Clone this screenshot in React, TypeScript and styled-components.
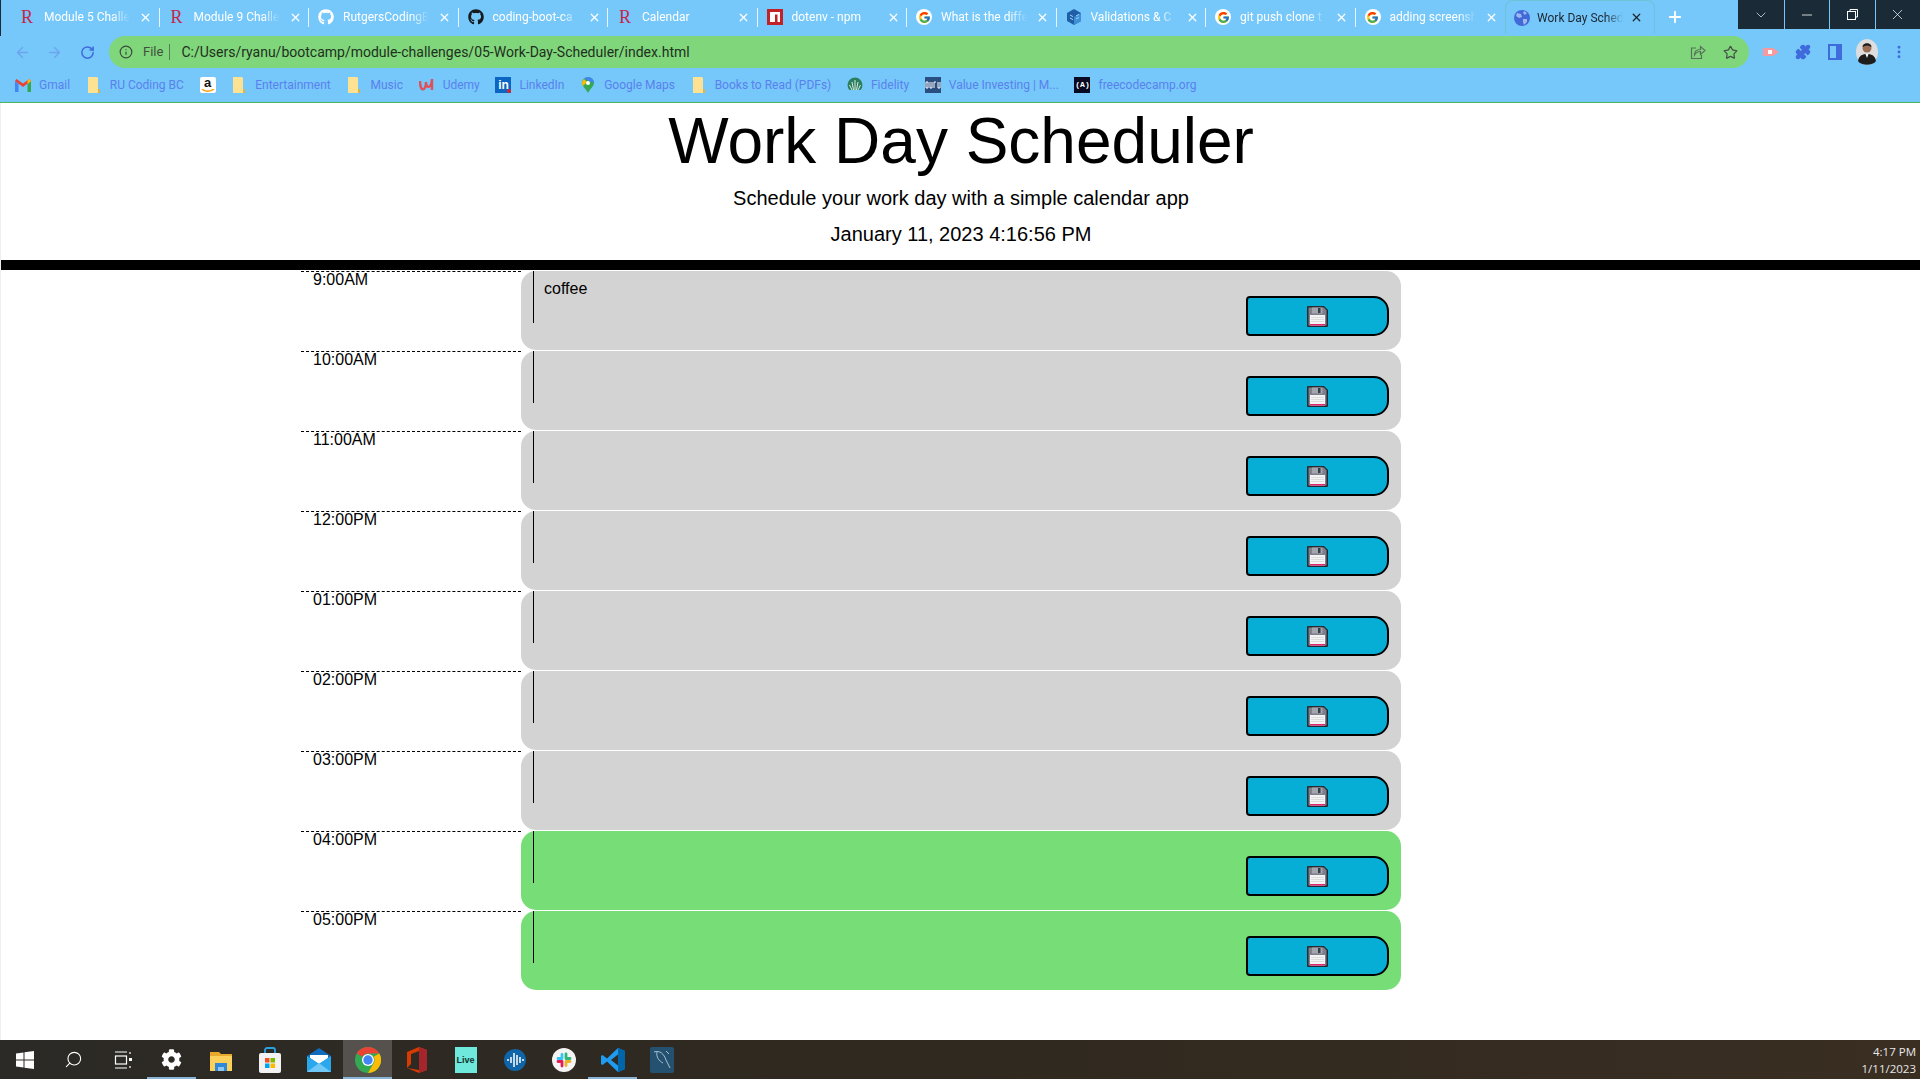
import styled, { createGlobalStyle } from "styled-components";
import { ArrowLeft, ArrowRight, RotateCw, Info, Star, Plus, X, ChevronDown, Minus, Search, MoreVertical, Puzzle } from "lucide-react";
import { FaGithub, FaCog } from "react-icons/fa";
import { FcGoogle } from "react-icons/fc";
import type { ReactNode } from "react";

const GlobalStyle = createGlobalStyle`
  html, body {
    margin: 0;
    padding: 0;
    background: #fff;
    overflow: hidden;
  }
  * { box-sizing: border-box; }
`;

const Screen = styled.div`
  width: 1920px;
  height: 1079px;
  display: flex;
  flex-direction: column;
  overflow: hidden;
  font-family: "Liberation Sans", Arial, sans-serif;
`;

const BrowserChrome = styled.header`
  height: 103px;
  flex: none;
  background: #76c8fa;
  border-bottom: 1px solid #4cb45a;
  font-family: "Roboto", "Liberation Sans", sans-serif;
`;

const TabStrip = styled.div`
  height: 36px;
  padding-left: 9px;
  border-left: 1px solid #1a2a36;
  display: flex;
  align-items: flex-start;
`;

const Tab = styled.div<{ $active?: boolean; $noRule?: boolean }>`
  width: 149.5px;
  height: 34px;
  flex: none;
  padding: 0 0 0 ${(p) => (p.$active ? "8px" : "9px")};
  display: flex;
  align-items: center;
  gap: ${(p) => (p.$active ? "7px" : "9px")};
  position: relative;
  ${(p) =>
    p.$active &&
    `
    border: 1px solid rgba(76, 180, 110, 0.25);
    border-bottom: none;
    border-radius: 8px 8px 0 0;
  `}
  ${(p) =>
    !p.$noRule &&
    `
    &::after {
      content: "";
      position: absolute;
      right: 0;
      top: 8px;
      width: 1px;
      height: 19px;
      background: #e8f5fe;
    }
  `}
`;

const TabIcon = styled.span`
  width: 16px;
  height: 16px;
  flex: none;
  display: flex;
  align-items: center;
  justify-content: center;
`;

const RutgersMark = styled.span`
  font-family: "Liberation Serif", serif;
  font-size: 18px;
  line-height: 16px;
  color: #c8254a;
`;

const GIcon = styled.span`
  width: 16px;
  height: 16px;
  border-radius: 50%;
  background: #fff;
  display: flex;
  align-items: center;
  justify-content: center;
`;

const TabTitle = styled.span<{ $active?: boolean }>`
  width: 86px;
  flex: none;
  white-space: nowrap;
  font-size: 12px;
  color: ${(p) => (p.$active ? "#1c2630" : "#fff")};
  mask-image: linear-gradient(90deg, #000 80%, transparent);
`;

const NewTab = styled.div`
  width: 40px;
  height: 34px;
  flex: none;
  display: flex;
  align-items: center;
  justify-content: center;
`;

const WindowControls = styled.div`
  margin-left: auto;
  display: flex;
  height: 29px;
`;

const WindowButton = styled.div`
  width: 45.5px;
  height: 29px;
  background: #1a2a36;
  color: #fff;
  display: flex;
  align-items: center;
  justify-content: center;
  & + & {
    border-left: 1px solid #76c8fa;
  }
`;

const AddressRow = styled.div`
  height: 32px;
  padding-left: 6px;
  display: flex;
  align-items: center;
`;

const NavButton = styled.div`
  width: 32.5px;
  flex: none;
  display: flex;
  justify-content: center;
`;

const Omnibox = styled.div`
  width: 1640px;
  height: 32px;
  margin-left: 5.5px;
  padding: 0 3px 0 10px;
  flex: none;
  border-radius: 16px;
  background: #80d67a;
  display: flex;
  align-items: center;
`;

const FileLabel = styled.span`
  margin-left: 10px;
  padding-right: 6px;
  border-right: 1px solid #5a7a5a;
  font-size: 13px;
  line-height: 16px;
  color: #3f4f3f;
`;

const Url = styled.span`
  margin-left: 11px;
  flex: 1;
  font-size: 14px;
  color: #20301f;
  white-space: nowrap;
`;

const OmniAction = styled.span`
  width: 32px;
  display: flex;
  justify-content: center;
`;

const ToolbarIcons = styled.div`
  margin-left: 6px;
  display: flex;
  align-items: center;
`;

const ToolIcon = styled.div`
  width: 32px;
  height: 32px;
  display: flex;
  align-items: center;
  justify-content: center;
`;

const BookmarkBar = styled.nav`
  height: 34px;
  padding-left: 15px;
  display: flex;
  align-items: center;
  gap: 15.7px;
`;

const Bookmark = styled.div`
  display: flex;
  align-items: center;
  gap: 8px;
`;

const BookmarkIcon = styled.span`
  width: 16px;
  height: 16px;
  display: flex;
  align-items: center;
  justify-content: center;
`;

const BookmarkLabel = styled.span`
  font-size: 12px;
  color: #5a80ee;
  white-space: nowrap;
`;

const AmazonBox = styled.span`
  width: 16px;
  height: 16px;
  border-radius: 2px;
  background: #fff;
  display: flex;
  flex-direction: column;
  align-items: center;
  font-family: "Liberation Sans", sans-serif;
  font-size: 13px;
  font-weight: 700;
  line-height: 12px;
  color: #111;
`;

const LinkedinBox = styled.span`
  width: 16px;
  height: 16px;
  position: relative;
  background: #0a66c2;
  font-family: "Liberation Sans", sans-serif;
  font-size: 12px;
  font-weight: 700;
  line-height: 16px;
  text-align: center;
  color: #fff;
`;

const LinkedinDot = styled.span`
  position: absolute;
  right: 0;
  bottom: 0;
  width: 4px;
  height: 4px;
  border-radius: 50%;
  background: #e02020;
`;

const GuruBox = styled.span`
  width: 16px;
  height: 16px;
  background: #2a4e80;
  display: flex;
  align-items: center;
`;

const FccBox = styled.span`
  width: 16px;
  height: 16px;
  background: #0a0a23;
  font-family: "Liberation Mono", monospace;
  font-size: 8px;
  font-weight: 700;
  line-height: 16px;
  text-align: center;
  color: #fff;
`;

const Page = styled.main`
  flex: 1;
  min-height: 0;
  border-left: 1px solid #eceef0;
  background: #fff;
  color: #000;
`;

const Jumbotron = styled.div`
  height: 167px;
  padding: 2px 0 0 1px;
  border-bottom: 10px solid #000;
  text-align: center;
`;

const Title = styled.h1`
  margin: 0 0 9px;
  font-size: 64px;
  font-weight: 400;
  line-height: 72px;
`;

const Lead = styled.p`
  margin: 0 0 12px;
  font-size: 20px;
  line-height: 24px;
`;

const Schedule = styled.section`
  width: 1320px;
  margin: 1px 0 0 300px;
`;

const TimeBlock = styled.div`
  height: 80px;
  display: flex;
`;

const Hour = styled.div`
  width: 220px;
  height: 80px;
  flex: none;
  padding: 0 0 0 12px;
  border-top: 1px dashed #000;
  font-size: 16px;
  line-height: 16px;
`;

const Entry = styled.div<{ $tone: string }>`
  width: 880px;
  height: 79px;
  padding-left: 12px;
  border-radius: 15px;
  background: ${(p) => (p.$tone === "future" ? "#77dd77" : "#d3d3d3")};
  position: relative;
`;

const Note = styled.textarea`
  display: block;
  width: 700px;
  height: 52px;
  padding: 9px 10px;
  border: none;
  border-left: 1px solid #000;
  background: transparent;
  resize: none;
  outline: none;
  font-family: "Liberation Sans", Arial, sans-serif;
  font-size: 16px;
  line-height: 18px;
  color: #000;
`;

const SaveButton = styled.button`
  position: absolute;
  top: 25px;
  right: 12px;
  width: 143px;
  height: 40px;
  padding: 0;
  border: 2px solid #000;
  border-radius: 4px 15px 15px 4px;
  background: #06aed5;
  display: flex;
  align-items: center;
  justify-content: center;
`;

const Taskbar = styled.footer`
  height: 39px;
  flex: none;
  background: linear-gradient(90deg, #2c2a26, #30291f 50%, #3a2e22);
  display: flex;
  align-items: stretch;
`;

const TaskbarItem = styled.div<{ $open?: boolean; $current?: boolean }>`
  width: 49px;
  flex: none;
  display: flex;
  align-items: center;
  justify-content: center;
  background: ${(p) => (p.$current ? "#55524d" : "transparent")};
  box-shadow: ${(p) => (p.$open ? "inset 0 -2px 0 #8ab4d8" : "none")};
`;

const LiveBox = styled.span`
  width: 22px;
  height: 26px;
  background: #6fe9dc;
  font-family: "Liberation Sans", sans-serif;
  font-size: 9px;
  font-weight: 700;
  line-height: 26px;
  text-align: center;
  color: #12332f;
`;

const Clock = styled.div`
  margin-left: auto;
  padding-right: 4px;
  display: flex;
  flex-direction: column;
  align-items: flex-end;
  justify-content: center;
  gap: 2px;
  font-family: "Open Sans", "Liberation Sans", sans-serif;
  font-size: 11.5px;
  line-height: 15px;
  color: #e8e8e8;
`;

/* ---------- small drawn icons ---------- */

const RutgersIcon = () => <RutgersMark>R</RutgersMark>;

const NpmIcon = () => (
  <svg width="16" height="16" viewBox="0 0 16 16">
    <rect width="16" height="16" fill="#c12127" />
    <path d="M3 3h10v10h-2.500V5.500H8V13H3z" fill="#fff" />
  </svg>
);

const CubeIcon = () => (
  <svg width="16" height="16" viewBox="0 0 16 16">
    <path d="M8 0l7 4v8l-7 4-7-4V4z" fill="#1f5fa8" />
    <path d="M8 8l7-4v8l-7 4z" fill="#3d8fd6" />
    <path d="M4 6l3 1.600M4 9l3 1.600M10 7l3-1.600M10 10l3-1.600" stroke="#a8d4f5" strokeWidth="1" />
  </svg>
);

const GlobeIcon = () => (
  <svg width="16" height="16" viewBox="0 0 16 16">
    <circle cx="8" cy="8" r="8" fill="#4169d8" />
    <path d="M3 3l4 1 1 3-3 1-3-2zM9 9l4 0 0 3-3 3-1-3zM10 1l3 2-2 2-2-2z" fill="#9db8ee" />
  </svg>
);

const ShareIcon = () => (
  <svg width="16" height="16" viewBox="0 0 16 16" fill="none" stroke="#57705a" strokeWidth="1.200">
    <path d="M6 4H1.500v10.500h10V11" />
    <path d="M4.500 11c0-3.500 2.500-5.500 6-5.500V2.500L15 6.500l-4.500 4V7.500c-2.500 0-4.500 1-6 3.500z" />
  </svg>
);

const GmailIcon = () => (
  <svg width="16" height="13" viewBox="0 0 16 13">
    <path d="M0 2v11h3.500V5z" fill="#4285f4" />
    <path d="M16 2v11h-3.500V5z" fill="#34a853" />
    <path d="M0 2l8 6 8-6-1.500-2L8 4.500 1.500 0z" fill="#ea4335" />
    <path d="M14.500 0L16 2l-3.500 3V1.500z" fill="#fbbc04" />
  </svg>
);

const FolderIcon = () => (
  <svg width="12" height="16" viewBox="0 0 12 16">
    <path d="M0 0h9l1 1v11l2 0v4H0z" fill="#fde293" />
    <path d="M10 12h2v4h-2z" fill="#d9b44a" />
  </svg>
);

const AmazonIcon = () => (
  <AmazonBox>
    a
    <svg width="14" height="4" viewBox="0 0 14 4">
      <path d="M1 0c3 3 8 3 12 0" stroke="#f90" strokeWidth="1.500" fill="none" />
    </svg>
  </AmazonBox>
);

const UdemyIcon = () => (
  <svg width="16" height="14" viewBox="0 0 16 14">
    <path d="M1 3c0 11 6 11 6 1M7 4c0 6 5 8 6-3M13 1v11" stroke="#e0505a" strokeWidth="2.400" fill="none" />
  </svg>
);

const LinkedinIcon = () => (
  <LinkedinBox>
    in
    <LinkedinDot />
  </LinkedinBox>
);

const MapsIcon = () => (
  <svg width="12" height="16" viewBox="0 0 12 16">
    <path d="M6 0a6 6 0 0 1 6 6c0 3-4 6-6 10-2-4-6-7-6-10a6 6 0 0 1 6-6z" fill="#34a853" />
    <path d="M6 0a6 6 0 0 1 6 6L2 2a6 6 0 0 1 4-2z" fill="#4285f4" />
    <path d="M0 6a6 6 0 0 1 2-4l3 3-4 4a5 5 0 0 1-1-3z" fill="#fbbc04" />
    <circle cx="6" cy="6" r="2" fill="#fff" />
  </svg>
);

const FidelityIcon = () => (
  <svg width="16" height="16" viewBox="0 0 16 16">
    <circle cx="8" cy="8" r="7.500" fill="#2b7f5e" />
    <path d="M8 3v10M5 5l1.500 8M11 5l-1.500 8M2.500 8L5 13M13.500 8L11 13" stroke="#d7ece2" strokeWidth="1" />
    <rect x="0" y="13" width="16" height="3" fill="#76c8fa" />
  </svg>
);

const GuruIcon = () => (
  <GuruBox>
    <svg width="16" height="9" viewBox="0 0 16 9">
      <path d="M1 1h2v6H1zM5 1v6h2V1M9 7V1h2M13 1v6h2V1" stroke="#fff" strokeWidth="1" fill="none" />
    </svg>
  </GuruBox>
);

const FccIcon = () => <FccBox>(A)</FccBox>;

const WindowsLogo = () => (
  <svg width="18" height="18" viewBox="0 0 18 18">
    <path d="M0 2.500l7.500-1V8.500H0zM8.500 1.300L18 0v8.500H8.500zM0 9.500h7.500v7L0 15.500zM8.500 9.500H18V18l-9.500-1.300z" fill="#fff" />
  </svg>
);

const TaskViewIcon = () => (
  <svg width="18" height="18" viewBox="0 0 18 18" fill="none" stroke="#fff" strokeWidth="1.200">
    <path d="M1 1h12M1 17h12" />
    <rect x="1.500" y="5" width="11" height="8" />
    <path d="M16 1v2M16 15v2" />
    <rect x="15" y="7" width="3" height="3" fill="#fff" stroke="none" />
  </svg>
);

const ExplorerIcon = () => (
  <svg width="24" height="24" viewBox="0 0 24 24">
    <path d="M1 4h9l2 2h11v4H1z" fill="#e6a92e" />
    <path d="M1 8h22v15H1z" fill="#fbd15b" />
    <path d="M6 15h12v8H6z" fill="#2f88d8" />
    <path d="M9 19h6v4H9z" fill="#8cc8f2" />
  </svg>
);

const StoreIcon = () => (
  <svg width="24" height="26" viewBox="0 0 24 26">
    <path d="M7 7V3a2 2 0 0 1 2-2h6a2 2 0 0 1 2 2v4" stroke="#2aa1e0" strokeWidth="1.800" fill="none" />
    <rect x="1" y="6" width="22" height="20" rx="2" fill="#f2f2f2" />
    <rect x="7" y="11" width="4.500" height="4.500" fill="#f25022" />
    <rect x="12.500" y="11" width="4.500" height="4.500" fill="#7fba00" />
    <rect x="7" y="16.500" width="4.500" height="4.500" fill="#00a4ef" />
    <rect x="12.500" y="16.500" width="4.500" height="4.500" fill="#ffb900" />
  </svg>
);

const MailIcon = () => (
  <svg width="24" height="24" viewBox="0 0 24 24">
    <path d="M0 8l12-8 12 8v16H0z" fill="#0f6cbd" />
    <path d="M3 7h18v3l-9 6-9-6z" fill="#fff" />
    <path d="M0 8l12 8 12-8v16H0z" fill="#2aa8ee" />
    <path d="M0 24l12-9 12 9z" fill="#6fc8f5" />
  </svg>
);

const ChromeIcon = () => (
  <svg width="26" height="26" viewBox="0 0 26 26">
    <circle cx="13" cy="13" r="13" fill="#34a853" />
    <path d="M13 0a13 13 0 0 1 11.300 6.500H13a6.500 6.500 0 0 0-5.600 3.200L1.700 6.500A13 13 0 0 1 13 0z" fill="#ea4335" />
    <path d="M24.300 6.500A13 13 0 0 1 13 26l5.600-9.700a6.500 6.500 0 0 0 0-6.500z" fill="#fbbc04" />
    <circle cx="13" cy="13" r="6" fill="#fff" />
    <circle cx="13" cy="13" r="4.700" fill="#4285f4" />
  </svg>
);

const OfficeIcon = () => (
  <svg width="20" height="26" viewBox="0 0 20 26">
    <path d="M0 5l12-5 8 3v20l-8 3-12-5 12 2V4L4 7v10l-4 4z" fill="#d83b01" />
    <path d="M12 0l8 3v20l-8 3z" fill="#a4262c" />
  </svg>
);

const SoundIcon = () => (
  <svg width="22" height="22" viewBox="0 0 22 22">
    <circle cx="11" cy="11" r="11" fill="#0f65a8" />
    <path d="M4 10v2M7 8v6M10 4v14M13 6v10M16 8v6M19 10v2" stroke="#fff" strokeWidth="1.500" />
  </svg>
);

const SlackIcon = () => (
  <svg width="24" height="24" viewBox="0 0 24 24">
    <circle cx="12" cy="12" r="12" fill="#f4f4f4" />
    <g strokeWidth="2.800" strokeLinecap="round">
      <path d="M10 6.500v4M6 10.500h4" stroke="#36c5f0" />
      <path d="M14 6v4.500M18 10.500h-4" stroke="#2eb67d" />
      <path d="M14 17.500v-4M18 13.500h-4" stroke="#ecb22e" />
      <path d="M10 18v-4.500M6 13.500h4" stroke="#e01e5a" />
    </g>
  </svg>
);

const CodeIcon = () => (
  <svg width="24" height="24" viewBox="0 0 24 24">
    <path d="M17 0l7 3v18l-7 3L6 13.500 1.500 17 0 16v-8l1.500-1L6 10.500z" fill="#1f9cf0" />
    <path d="M17 6.500L10 12l7 5.500z" fill="#2f2a24" />
    <path d="M17 0l7 3v18l-7 3z" fill="#0065a9" />
  </svg>
);

const WorkbenchIcon = () => (
  <svg width="24" height="26" viewBox="0 0 24 26">
    <rect width="24" height="26" rx="2" fill="#24516f" />
    <path d="M4 5c6-2 10 2 12 8 1 3 3 5 4 8M7 5c-1 5 2 9 6 11M16 4l3 3" stroke="#a9c1d1" strokeWidth="1" fill="none" />
  </svg>
);

const FloppyIcon = () => (
  <svg width="21" height="21" viewBox="0 0 21 21">
    <path d="M0 1a1 1 0 0 1 1-1h16l4 4v16a1 1 0 0 1-1 1H1a1 1 0 0 1-1-1z" fill="#262a33" />
    <path d="M1.500 1.500h15.500l2.500 3v15h-18z" fill="#7d7f8a" />
    <rect x="5" y="1.500" width="10.500" height="6" fill="#a3a5ae" />
    <rect x="11" y="2" width="2.500" height="5" fill="#3a3e48" />
    <rect x="3" y="9" width="15" height="10.500" fill="#f4f4f4" />
    <path d="M4 11.500h13M4 13.500h13M4 15.500h13" stroke="#dcdcdc" strokeWidth="1" />
    <rect x="3" y="18" width="15" height="1.500" fill="#e0246f" />
  </svg>
);

/* ---------- data ---------- */

const tabs: { title: string; icon: ReactNode; active?: boolean; noRule?: boolean }[] = [
  { title: "Module 5 Challe", icon: <RutgersIcon /> },
  { title: "Module 9 Challe", icon: <RutgersIcon /> },
  { title: "RutgersCodingB", icon: <FaGithub size={16} color="#fff" /> },
  { title: "coding-boot-ca", icon: <FaGithub size={16} color="#161b22" /> },
  { title: "Calendar", icon: <RutgersIcon /> },
  { title: "dotenv - npm", icon: <NpmIcon /> },
  { title: "What is the diffe", icon: <GIcon><FcGoogle size={13} /></GIcon> },
  { title: "Validations & C", icon: <CubeIcon /> },
  { title: "git push clone t", icon: <GIcon><FcGoogle size={13} /></GIcon> },
  { title: "adding screensh", icon: <GIcon><FcGoogle size={13} /></GIcon>, noRule: true },
  { title: "Work Day Sched", icon: <GlobeIcon />, active: true, noRule: true },
];

const bookmarks: { label?: string; icon: ReactNode }[] = [
  { label: "Gmail", icon: <GmailIcon /> },
  { label: "RU Coding BC", icon: <FolderIcon /> },
  { icon: <AmazonIcon /> },
  { label: "Entertainment", icon: <FolderIcon /> },
  { label: "Music", icon: <FolderIcon /> },
  { label: "Udemy", icon: <UdemyIcon /> },
  { label: "LinkedIn", icon: <LinkedinIcon /> },
  { label: "Google Maps", icon: <MapsIcon /> },
  { label: "Books to Read (PDFs)", icon: <FolderIcon /> },
  { label: "Fidelity", icon: <FidelityIcon /> },
  { label: "Value Investing | M...", icon: <GuruIcon /> },
  { label: "freecodecamp.org", icon: <FccIcon /> },
];

const hours = [
  { time: "9:00AM", tone: "past", text: "coffee" },
  { time: "10:00AM", tone: "past", text: "" },
  { time: "11:00AM", tone: "past", text: "" },
  { time: "12:00PM", tone: "past", text: "" },
  { time: "01:00PM", tone: "past", text: "" },
  { time: "02:00PM", tone: "past", text: "" },
  { time: "03:00PM", tone: "past", text: "" },
  { time: "04:00PM", tone: "future", text: "" },
  { time: "05:00PM", tone: "future", text: "" },
];

const taskbarItems: { icon: ReactNode; open?: boolean; current?: boolean }[] = [
  { icon: <WindowsLogo /> },
  { icon: <Search size={19} color="#fff" strokeWidth={1.4} style={{ transform: "scaleX(-1)" }} /> },
  { icon: <TaskViewIcon /> },
  { icon: <FaCog size={21} color="#fff" />, open: true },
  { icon: <ExplorerIcon /> },
  { icon: <StoreIcon /> },
  { icon: <MailIcon /> },
  { icon: <ChromeIcon />, open: true, current: true },
  { icon: <OfficeIcon /> },
  { icon: <LiveBox>Live</LiveBox> },
  { icon: <SoundIcon /> },
  { icon: <SlackIcon /> },
  { icon: <CodeIcon />, open: true },
  { icon: <WorkbenchIcon /> },
];

export default function App() {
  return (
    <Screen>
      <GlobalStyle />
      <BrowserChrome>
        <TabStrip>
          {tabs.map((tab) => (
            <Tab key={tab.title} $active={tab.active} $noRule={tab.noRule}>
              <TabIcon>{tab.icon}</TabIcon>
              <TabTitle $active={tab.active}>{tab.title}</TabTitle>
              <X size={13} strokeWidth={2.4} color={tab.active ? "#1c2630" : "#fff"} />
            </Tab>
          ))}
          <NewTab>
            <Plus size={18} strokeWidth={2.4} color="#fff" />
          </NewTab>
          <WindowControls>
            <WindowButton><ChevronDown size={16} strokeWidth={1} /></WindowButton>
            <WindowButton><Minus size={16} strokeWidth={1.2} /></WindowButton>
            <WindowButton>
              <svg width="11" height="11" viewBox="0 0 11 11" fill="none" stroke="#fff">
                <rect x="0.5" y="2.5" width="8" height="8" />
                <path d="M3 2.5V.5h7.500V8H8.500" />
              </svg>
            </WindowButton>
            <WindowButton><X size={17} strokeWidth={1} /></WindowButton>
          </WindowControls>
        </TabStrip>
        <AddressRow>
          <NavButton><ArrowLeft size={17} color="#6ea4ee" strokeWidth={2} /></NavButton>
          <NavButton><ArrowRight size={17} color="#6ea4ee" strokeWidth={2} /></NavButton>
          <NavButton><RotateCw size={15} color="#3f6bdc" strokeWidth={2.4} /></NavButton>
          <Omnibox>
            <Info size={14} color="#3c4a3a" />
            <FileLabel>File</FileLabel>
            <Url>C:/Users/ryanu/bootcamp/module-challenges/05-Work-Day-Scheduler/index.html</Url>
            <OmniAction><ShareIcon /></OmniAction>
            <OmniAction><Star size={15} color="#44524a" strokeWidth={2} /></OmniAction>
          </Omnibox>
          <ToolbarIcons>
            <ToolIcon>
              <svg width="16" height="12" viewBox="0 0 16 12">
                <path d="M0 2h10l6 4-6 4H0z" fill="#f79a9f" />
                <rect x="5" y="4" width="4" height="4" fill="#fff" />
              </svg>
            </ToolIcon>
            <ToolIcon><Puzzle size={16} color="#3f6bdc" fill="#3f6bdc" /></ToolIcon>
            <ToolIcon>
              <svg width="14" height="16" viewBox="0 0 14 16">
                <rect width="14" height="16" fill="#3f6bdc" />
                <rect x="2" y="2" width="6" height="12" fill="#76c8fa" />
              </svg>
            </ToolIcon>
            <ToolIcon>
              <svg width="22" height="26" viewBox="0 0 22 26">
                <ellipse cx="11" cy="13" rx="11" ry="13" fill="#ddd" />
                <path d="M2 22c1-6 5-7 9-7s8 1 9 7c-3 5-15 5-18 0z" fill="#1c1c1c" />
                <path d="M9.500 15h3l-1.500 4z" fill="#fff" />
                <circle cx="11" cy="9" r="4.500" fill="#9a6d55" />
                <path d="M6.500 8c0-5 9-5 9 0-3-2-6-2-9 0z" fill="#1c1c1c" />
              </svg>
            </ToolIcon>
            <ToolIcon><MoreVertical size={16} color="#3f6bdc" strokeWidth={2.4} /></ToolIcon>
          </ToolbarIcons>
        </AddressRow>
        <BookmarkBar>
          {bookmarks.map((mark, i) => (
            <Bookmark key={i}>
              <BookmarkIcon>{mark.icon}</BookmarkIcon>
              {mark.label && <BookmarkLabel>{mark.label}</BookmarkLabel>}
            </Bookmark>
          ))}
        </BookmarkBar>
      </BrowserChrome>

      <Page>
        <Jumbotron>
          <Title>Work Day Scheduler</Title>
          <Lead>Schedule your work day with a simple calendar app</Lead>
          <Lead>January 11, 2023 4:16:56 PM</Lead>
        </Jumbotron>
        <Schedule>
          {hours.map((hour) => (
            <TimeBlock key={hour.time}>
              <Hour>{hour.time}</Hour>
              <Entry $tone={hour.tone}>
                <Note defaultValue={hour.text} />
                <SaveButton aria-label="save">
                  <FloppyIcon />
                </SaveButton>
              </Entry>
            </TimeBlock>
          ))}
        </Schedule>
      </Page>

      <Taskbar>
        {taskbarItems.map((item, i) => (
          <TaskbarItem key={i} $open={item.open} $current={item.current}>
            {item.icon}
          </TaskbarItem>
        ))}
        <Clock>
          <span>4:17 PM</span>
          <span>1/11/2023</span>
        </Clock>
      </Taskbar>
    </Screen>
  );
}
